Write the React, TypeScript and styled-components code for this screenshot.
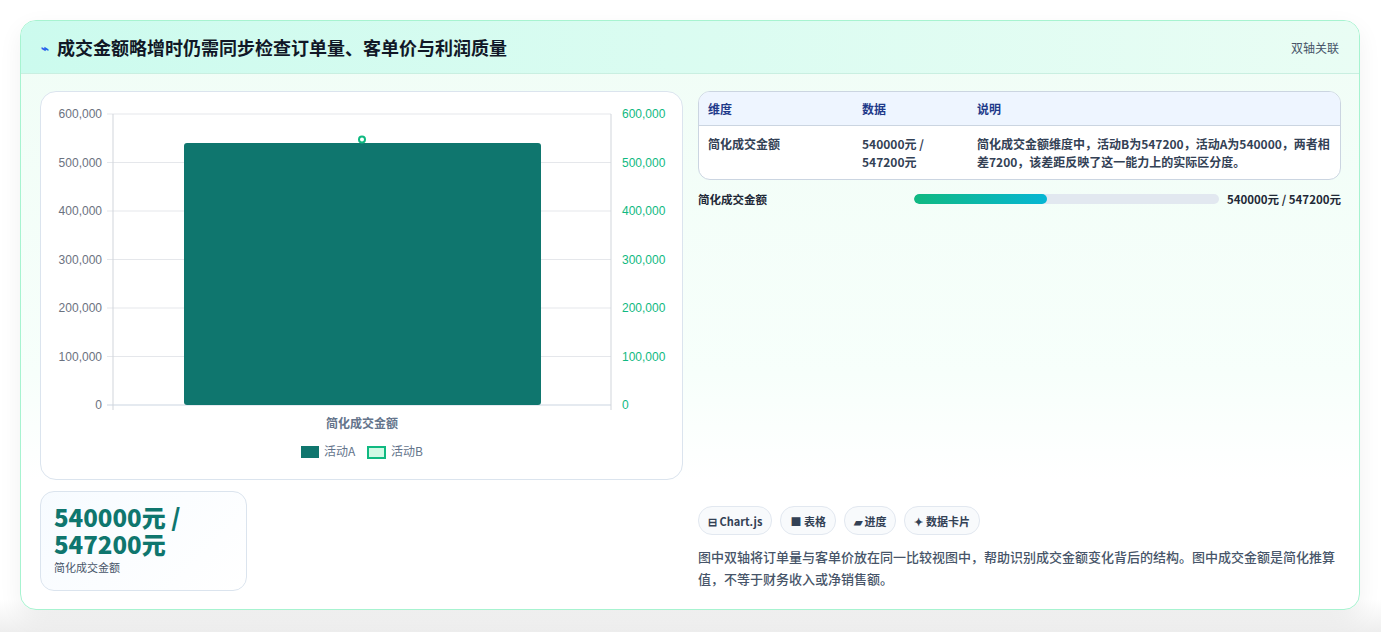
import React from "react";
import styled, { createGlobalStyle } from "styled-components";

const Global = createGlobalStyle`
  html, body { margin: 0; padding: 0; background: #f3f4f6; }
  body { font-family: "Noto Sans CJK SC", "Noto Sans", sans-serif; }
`;

const Page = styled.div`
  width: 1381px; height: 632px; box-sizing: border-box;
  padding: 20px 21px 22px 20px; background: linear-gradient(#ffffff 0, #ffffff 600px, #eeeeee 632px);
`;
const Card = styled.div`
  height: 590px; box-sizing: border-box; border: 1px solid #a7f3d0; border-radius: 16px;
  overflow: hidden; background: linear-gradient(180deg, #f0fdf6 0%, #f7fffb 60%, #ffffff 78%);
  box-shadow: 0 8px 24px rgba(0,0,0,0.06);
  display: flex; flex-direction: column;
`;
const Header = styled.div`
  height: 56px; box-sizing: border-box; display: flex; align-items: center; justify-content: space-between;
  padding: 0 20px; background: linear-gradient(90deg, #ccfbee, #e9fdf4);
  border-bottom: 1px solid #c9efe1;
`;
const Title = styled.h1`
  margin: 0; font-size: 18px; font-weight: 700; color: #111827; display: flex; align-items: center; gap: 8px;
`;
const TitleIcon = styled.span` color: #2563eb; font-size: 13px; `;
const HeaderTag = styled.span` font-size: 12px; color: #475569; `;
const Body = styled.div`
  flex: 1; display: grid; grid-template-columns: 643px 643px; grid-template-rows: 389px 1fr;
  column-gap: 15px; row-gap: 11px; padding: 17px 19px 18px 19px;
`;
const ChartCard = styled.div`
  background: #fff; border: 1px solid #dbe4ee; border-radius: 16px; overflow: hidden;
`;
const RightTop = styled.div` display: flex; flex-direction: column; gap: 11px; `;
const Table = styled.div`
  border: 1px solid #cbd5e1; border-radius: 12px; overflow: hidden; background: #fff;
`;
const Row = styled.div<{ $head?: boolean }>`
  display: grid; grid-template-columns: 154px 115px 1fr; padding: 0 9px;
  ${p => p.$head ? "height: 33px; align-items: center; background: #eef5ff; border-bottom: 1px solid #cbd5e1;" : "padding-top: 9px; padding-bottom: 8px;"}
  font-size: 12px; font-weight: 600; line-height: 18px;
  color: ${p => p.$head ? "#1e3a8a" : "#334155"};
`;
const Progress = styled.div`
  display: grid; grid-template-columns: 208px 1fr auto; align-items: center; gap: 8px;
  font-size: 11.5px; font-weight: 600; color: #1f2937;
`;
const Track = styled.div` height: 10px; border-radius: 5px; background: #e2e8f0; overflow: hidden; `;
const Fill = styled.div` height: 100%; border-radius: 5px; background: linear-gradient(90deg, #10b981, #06b6d4); `;
const Kpi = styled.div`
  width: 207px; height: 100px; box-sizing: border-box; border: 1px solid #dbe4ee; border-radius: 14px;
  background: linear-gradient(135deg, #f7fbff, #ffffff); padding: 11px 13px;
`;
const KpiValue = styled.div` font-size: 24px; font-weight: 800; color: #0f766e; line-height: 27px; `;
const KpiLabel = styled.div` font-size: 11px; color: #475569; margin-top: 2px; line-height: 16px; `;
const RightBottom = styled.div` display: flex; flex-direction: column; justify-content: flex-end; gap: 11px; padding-bottom: 1px; `;
const Chips = styled.div` display: flex; gap: 8px; `;
const Chip = styled.span`
  height: 29px; box-sizing: border-box; padding: 0 9px; border: 1px solid #e2e8f0; border-radius: 14px;
  background: #f8fafc; display: inline-flex; align-items: center; gap: 4px;
  font-size: 11px; font-weight: 700; color: #334155;
`;
const Note = styled.p` margin: 0; font-size: 13px; line-height: 22px; color: #475569; font-weight: 500; `;

const ticks = [0, 1, 2, 3, 4, 5, 6];
const y0 = 313, step = 48.5;

function Chart() {
  return (
    <svg width="643" height="389" viewBox="0 0 643 389" fontFamily="Liberation Sans, sans-serif">
      {ticks.map(t => {
        const y = y0 - t * step;
        const lab = t === 0 ? "0" : `${t}00,000`;
        return (
          <g key={t}>
            <line x1="66" x2="570" y1={y} y2={y} stroke={t === 0 ? "#cbd5e1" : "#e5e7eb"} />
            <text x="61" y={y + 4} textAnchor="end" fontSize="12" fill="#6b7280">{lab}</text>
            <text x="581" y={y + 4} fontSize="12" fill="#10b981">{lab}</text>
          </g>
        );
      })}
      <line x1="72" x2="72" y1="22" y2="318" stroke="#d1d5db" />
      <line x1="570" x2="570" y1="22" y2="318" stroke="#d1d5db" />
      <rect x="143" y={y0 - 5.4 * step} width="357" height={5.4 * step} rx="3" fill="#0f766e" />
      <circle cx="321" cy={y0 - 5.472 * step} r="3" fill="#fff" stroke="#10b981" strokeWidth="2" />
      <text x="321" y="336" textAnchor="middle" fontSize="12" fontWeight="700" fill="#64748b" fontFamily="Noto Sans CJK SC">简化成交金额</text>
      <rect x="260" y="354" width="18" height="12" fill="#0f766e" />
      <text x="283" y="364" fontSize="12" fill="#64748b" fontFamily="Noto Sans CJK SC">活动A</text>
      <rect x="327" y="355" width="17" height="11" fill="#d1fae5" stroke="#10b981" strokeWidth="2" />
      <text x="350" y="364" fontSize="12" fill="#64748b" fontFamily="Noto Sans CJK SC">活动B</text>
    </svg>
  );
}

export default function App() {
  return (
    <Page>
      <Global />
      <Card>
        <Header>
          <Title><TitleIcon>⌁</TitleIcon>成交金额略增时仍需同步检查订单量、客单价与利润质量</Title>
          <HeaderTag>双轴关联</HeaderTag>
        </Header>
        <Body>
          <ChartCard><Chart /></ChartCard>
          <RightTop>
            <Table>
              <Row $head><span>维度</span><span>数据</span><span>说明</span></Row>
              <Row>
                <span>简化成交金额</span>
                <span>540000元 /<br />547200元</span>
                <span>简化成交金额维度中，活动B为547200，活动A为540000，两者相差7200，该差距反映了这一能力上的实际区分度。</span>
              </Row>
            </Table>
            <Progress>
              <span>简化成交金额</span>
              <Track><Fill style={{ width: "43.5%" }} /></Track>
              <span>540000元 / 547200元</span>
            </Progress>
          </RightTop>
          <div>
            <Kpi>
              <KpiValue>540000元 /<br />547200元</KpiValue>
              <KpiLabel>简化成交金额</KpiLabel>
            </Kpi>
          </div>
          <RightBottom>
            <Chips>
              <Chip>⊟ Chart.js</Chip>
              <Chip>■ 表格</Chip>
              <Chip>▰ 进度</Chip>
              <Chip>✦ 数据卡片</Chip>
            </Chips>
            <Note>图中双轴将订单量与客单价放在同一比较视图中，帮助识别成交金额变化背后的结构。图中成交金额是简化推算值，不等于财务收入或净销售额。</Note>
          </RightBottom>
        </Body>
      </Card>
    </Page>
  );
}
